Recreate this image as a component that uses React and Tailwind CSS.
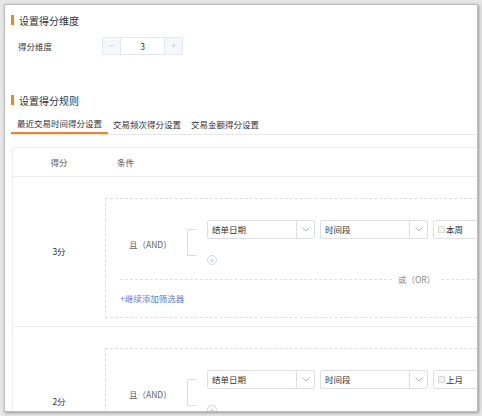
import React from "react";

function SectionTitle({ children }) {
  return (
    <div className="flex h-[30px] items-center pl-[6px]">
      <span className="mr-[5px] h-[10px] w-[3px] bg-[#f5821f]" />
      <span className="text-[10px] text-[#333]">{children}</span>
    </div>
  );
}

function Chevron() {
  return (
    <svg width="8" height="5" viewBox="0 0 8 5" fill="none">
      <path d="M0.5 0.5 L4 4 L7.5 0.5" stroke="#a8abb2" strokeWidth="0.9" />
    </svg>
  );
}

function Select({ label }) {
  return (
    <div className="flex h-[19px] w-[108px] items-center rounded-[2px] border border-[#dcdfe6] bg-white">
      <span className="flex-1 pl-[4px] text-[8.5px] text-[#333]">{label}</span>
      <span className="flex h-full w-[18px] items-center justify-center border-l border-[#dcdfe6]">
        <Chevron />
      </span>
    </div>
  );
}

function DateBox({ label }) {
  return (
    <div className="flex h-[19px] w-[108px] items-center rounded-[2px] border border-[#dcdfe6] bg-white pl-[4px]">
      <span className="mr-[1px] h-[7px] w-[7px] rounded-[1px] border border-[#d8d8d8] bg-[#f2f2f2]" />
      <span className="text-[8.5px] text-[#333]">{label}</span>
    </div>
  );
}

function RuleRow({ score, period }) {
  return (
    <div className="flex h-[150px] border-b border-[#ebeef5]">
      <div className="flex w-[92px] shrink-0 items-center justify-center text-[8.5px] text-[#333]">
        {score}
      </div>
      <div className="flex-1 pt-[21px]">
        <div className="h-[120px] border border-dashed border-[#dcdfe6] pt-[21px]">
          <div className="flex items-center">
            <div className="w-[81px] shrink-0 pl-[23px] pt-[4px] text-[8.5px] text-[#666]">
              且（AND）
            </div>
            <div className="h-[27px] w-[10px] shrink-0 border-y border-l border-[#dcdfe6]" />
            <div className="ml-[10px] flex flex-col">
              <div className="flex gap-[5px]">
                <Select label="结单日期" />
                <Select label="时间段" />
                <DateBox label={period} />
              </div>
              <div className="mt-[16px] flex h-[10px] w-[10px] items-center justify-center rounded-full border border-[#d4d7de] text-[9px] leading-none text-[#c0c4cc]">
                +
              </div>
            </div>
          </div>
          <div className="mt-[8px] flex h-[12px] items-center pl-[14px]">
            <div className="w-[272px] border-t border-dashed border-[#dcdfe6]" />
            <span className="px-[6px] text-[8.5px] text-[#888]">或（OR）</span>
            <div className="flex-1 border-t border-dashed border-[#dcdfe6]" />
          </div>
          <div className="mt-[7px] pl-[14px] text-[8.5px] text-[#4a80d9]">+继续添加筛选器</div>
        </div>
      </div>
    </div>
  );
}

export default function App() {
  return (
    <div className="h-[416px] w-[482px] overflow-hidden bg-[#e6e6e6] pl-[4px] pt-[4px] font-['Noto_Sans_CJK_SC','Liberation_Sans',sans-serif]">
      <div className="h-[408px] w-[474px] overflow-hidden border border-[#bcbcbc] bg-white shadow-[1px_1px_3px_rgba(0,0,0,0.35)]">
        <SectionTitle>设置得分维度</SectionTitle>
        <div className="mt-[2px] flex items-center pl-[13px]">
          <span className="w-[84px] text-[8.5px] text-[#333]">得分维度</span>
          <div className="flex h-[18px] w-[81px] rounded-[2px] border border-[#e4e7ed]">
            <span className="flex w-[18px] items-center justify-center border-r border-[#e4e7ed] bg-[#f5f7fa] text-[9px] text-[#c0c4cc]">
              −
            </span>
            <span className="flex flex-1 items-center justify-center text-[8.5px] text-[#333]">3</span>
            <span className="flex w-[18px] items-center justify-center border-l border-[#e4e7ed] bg-[#f5f7fa] text-[9px] text-[#c0c4cc]">
              +
            </span>
          </div>
        </div>

        <div className="mt-[30px]">
          <SectionTitle>设置得分规则</SectionTitle>
        </div>

        <div className="ml-[6px] flex h-[20px] items-stretch border-b border-[#e8e8e8] text-[8.5px] text-[#333]">
          <div className="flex items-center border-b-2 border-[#f5821f] px-[6px]">最近交易时间得分设置</div>
          <div className="flex items-center px-[5px]">交易频次得分设置</div>
          <div className="flex items-center px-[5px]">交易金额得分设置</div>
        </div>

        <div className="ml-[7px] mt-[12px] w-[500px] border border-[#ebeef5]">
          <div className="flex h-[29px] items-center border-b border-[#ebeef5] text-[8.5px] text-[#555]">
            <div className="w-[92px] text-center">得分</div>
            <div className="pl-[12px]">条件</div>
          </div>
          <RuleRow score="3分" period="本周" />
          <RuleRow score="2分" period="上月" />
        </div>
      </div>
    </div>
  );
}
